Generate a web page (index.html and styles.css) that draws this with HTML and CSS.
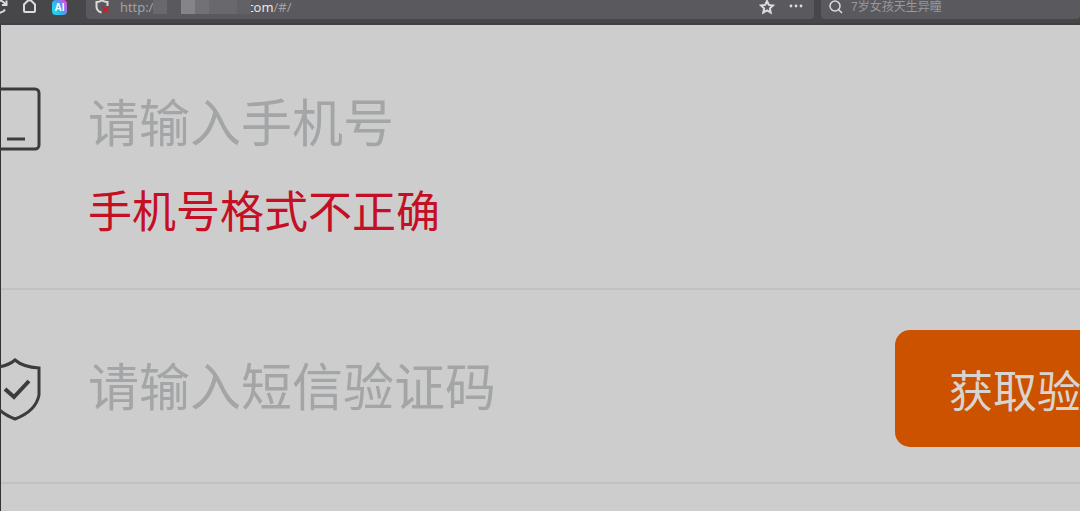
FILE: index.html
```html
<!DOCTYPE html>
<html lang="zh-CN">
<head>
<meta charset="UTF-8" />
<meta name="viewport" content="width=device-width, initial-scale=1" />
<title>手机号验证</title>
<link rel="stylesheet" href="styles.css">
</head>
<body>

<!-- Browser toolbar -->
<header class="toolbar">
  <nav class="tools">
    <button type="button" class="tool" aria-label="刷新">
      <svg width="16" height="16" viewBox="0 0 16 16"><path d="M13.500 6A6 6 0 1 0 13 10.500M14.500 1.500V6H10" /></svg>
    </button>
    <button type="button" class="tool" aria-label="主页">
      <svg width="16" height="16" viewBox="0 0 16 16"><path d="M2 5.500L6 1.500h3l4 4V12q0 1-1 1H3q-1 0-1-1z" /></svg>
    </button>
    <button type="button" class="tool" aria-label="AI">
      <span class="ai-logo">AI</span>
    </button>
  </nav>

  <div class="address">
    <svg class="site-icon" width="16" height="16" viewBox="0 0 16 16">
      <path d="M8 1.500Q5.500 3 2.500 3v4.500Q2.500 12 7.500 13.500M8 1.500Q10.500 3 13.500 3v4" />
      <path class="cross" d="M8.500 7.500l6 6M14.500 7.500l-6 6" />
    </svg>
    <div class="url"><span>http:/</span><span class="mask"><i></i><i></i><i></i><i></i><i></i><i></i><i></i></span><span class="domain">com</span><span>/#/</span></div>
    <button type="button" class="tool" aria-label="收藏">
      <svg width="16" height="16" viewBox="0 0 16 16"><path d="M8 2l1.800 3.900 4.200.5-3.100 2.900.8 4.200L8 11.400l-3.700 2.100.8-4.200L2 6.400l4.200-.5z" /></svg>
    </button>
    <button type="button" class="tool" aria-label="更多">
      <svg class="dots" width="16" height="16" viewBox="0 0 16 16"><circle cx="3" cy="7" r="1.400" /><circle cx="8" cy="7" r="1.400" /><circle cx="13" cy="7" r="1.400" /></svg>
    </button>
  </div>

  <label class="search">
    <svg width="16" height="16" viewBox="0 0 16 16"><circle cx="7" cy="7" r="5" /><path d="M10.700 10.700L14 14" /></svg>
    <input type="text" placeholder="7岁女孩天生异瞳" aria-label="搜索" />
  </label>
</header>

<!-- Login form -->
<form class="login">
  <div class="row">
    <label class="icon" for="phone">
      <svg width="48" height="64" viewBox="0 0 48 64"><rect x="-1" y="2" width="47" height="60" rx="4" /><path d="M14 52h18" /></svg>
    </label>
    <div class="field">
      <input type="tel" id="phone" placeholder="请输入手机号" />
      <p class="error">手机号格式不正确</p>
    </div>
  </div>

  <div class="row row-code">
    <label class="icon" for="code">
      <svg class="shield" width="56" height="64" viewBox="0 0 56 64"><path d="M29 3Q21 10 5 11v27Q8 54 29 62Q50 54 53 38V11Q37 10 29 3z" /><path class="tick" d="M19 32l9 8 15-16" /></svg>
    </label>
    <div class="field">
      <input type="text" id="code" placeholder="请输入短信验证码" />
    </div>
    <button type="button" class="send">获取验证码</button>
  </div>
</form>

</body>
</html>
```

FILE: styles.css
```css
* {
  box-sizing: border-box;
}
body {
  margin: 0;
  min-height: 100vh;
  background: #cdcdcd;
  font-family: "Liberation Sans", "Noto Sans CJK SC", sans-serif;
  overflow: hidden;
  display: flex;
  flex-direction: column;
}
button {
  border: none;
  padding: 0;
  background: none;
  font-family: inherit;
}
input {
  border: none;
  padding: 0;
  background: none;
  outline: none;
  font-family: inherit;
  width: 100%;
}
svg {
  display: block;
  flex: none;
  fill: none;
  stroke: #dcdcde;
  stroke-width: 2;
}

/* Toolbar */
.toolbar {
  display: flex;
  align-items: flex-start;
  gap: 7px;
  height: 25px;
  background: #47474a;
  border-bottom: 2px solid #414144;
}
.tools {
  display: flex;
  gap: 14px;
  width: 79px;
  margin-left: -8px;
}
.tool {
  width: 16px;
  height: 14px;
  display: flex;
  align-items: center;
  flex: none;
}
.tools + .address {
  margin-left: 8px;
}
.ai-logo {
  width: 15px;
  height: 15px;
  border-radius: 4px;
  background: linear-gradient(60deg, #18d6f0 20%, #4a9cf4 55%, #e04ce0 90%);
  color: #fff;
  font-size: 10px;
  line-height: 15px;
  font-weight: bold;
}
.address,
.search {
  display: flex;
  align-items: center;
  height: 19px;
  padding-bottom: 5px;
  background: #5a5a5e;
  border-radius: 0 0 4px 4px;
}
.address {
  flex: 1;
  gap: 13px;
  padding-left: 8px;
  padding-right: 10px;
}
.site-icon .cross {
  stroke: #c8202c;
}
.url {
  flex: 1;
  display: flex;
  align-items: center;
  color: #a4a4a8;
  font-family: "Open Sans", sans-serif;
  font-size: 13px;
  line-height: 14px;
  margin-left: -3px;
}
.domain {
  color: #ececee;
}
/* blocks that hide the host name */
.mask {
  position: relative;
  display: flex;
  width: 98px;
  height: 14px;
  margin-right: -4px;
}
.mask i {
  flex: 1;
  background: #69696d;
}
.mask i:nth-child(2) {
  background: #5a5a5e;
}
.mask i:nth-child(3) {
  background: #858589;
}
.mask i:nth-child(4) {
  background: #727276;
}
.mask i:last-child {
  background: #626266;
}
.search {
  width: 259px;
  gap: 7px;
  padding-left: 7px;
}
.search svg {
  stroke-width: 1.5;
}
.search input {
  font-size: 12px;
  line-height: 14px;
  height: 14px;
}
.search input::placeholder {
  color: #98989c;
}
.dots {
  fill: #dcdcde;
  stroke: none;
}

/* Form */
.login {
  flex: 1;
  border-left: 1px solid #333;
}
.row {
  display: flex;
  align-items: flex-start;
  padding-top: 61px;
  padding-bottom: 42px;
  border-bottom: 2px solid #c1c1c2;
}
.icon {
  width: 87px;
  flex: none;
}
.icon svg {
  margin-top: 1px;
  margin-left: -8px;
  stroke: #3c3c3d;
  stroke-width: 3;
}
.icon .shield {
  margin-left: -15px;
}
.icon .tick {
  stroke-width: 4;
}
.field {
  flex: 1;
  min-width: 0;
}
.field input {
  display: block;
  height: 76px;
  font-size: 51px;
}
.field input::placeholder {
  color: #a3a5a6;
  opacity: 1;
}
.error {
  margin: 18px 0 0;
  color: #c40f24;
  font-size: 44px;
  line-height: 66px;
}
.row-code {
  align-items: center;
  padding-top: 40px;
  padding-bottom: 35px;
}
/* the send button runs past the right edge */
.send {
  flex: none;
  height: 117px;
  padding: 0 54px;
  margin-right: -143px;
  border-radius: 15px;
  background: #cc5200;
  color: #d8d4d0;
  font-size: 44px;
}
```
